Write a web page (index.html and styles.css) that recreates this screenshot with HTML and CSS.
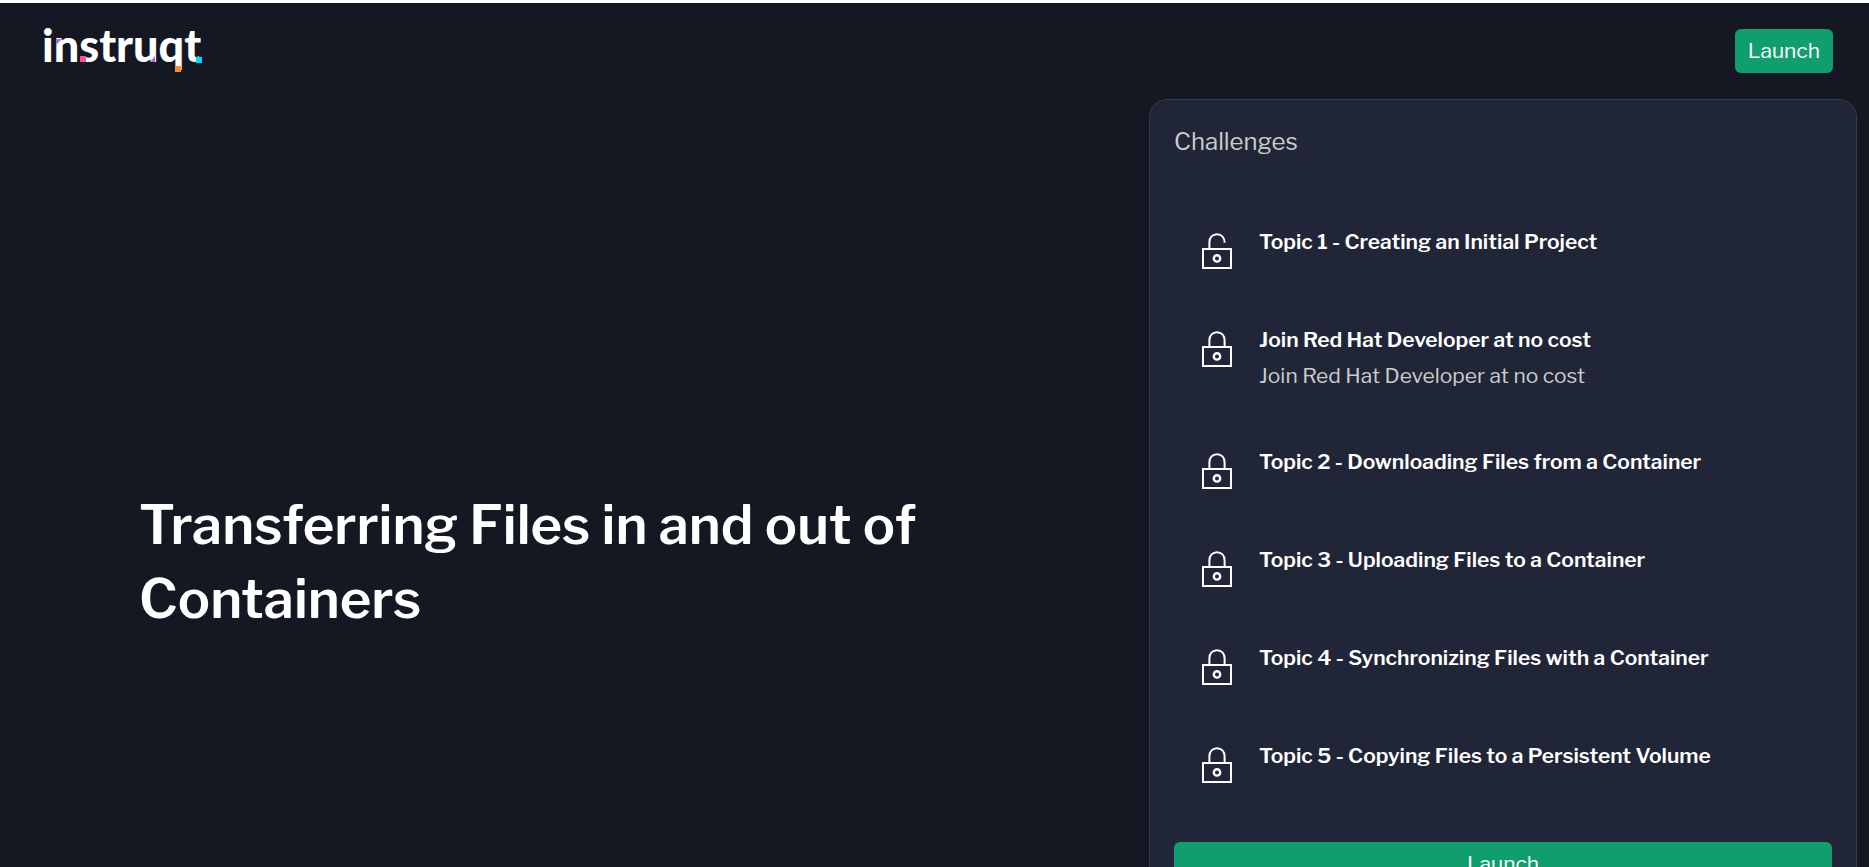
FILE: index.html
```html
<!DOCTYPE html>
<html lang="en">
<head>
<meta charset="utf-8">
<title>Transferring Files in and out of Containers</title>
<link rel="stylesheet" href="styles.css">
</head>
<body>
<svg class="sprite" aria-hidden="true">
  <symbol id="lock-body" viewBox="0 0 48 48">
    <path d="M10 25H38V44H10Z"/>
    <circle cx="24" cy="34.4" r="3.2" stroke-width="2.4"/>
  </symbol>
  <symbol id="lock-open" viewBox="0 0 48 48">
    <use href="#lock-body"/>
    <path d="M16.4 25V18.2C16.4 13.4 19.6 10.2 24 10.2C28.6 10.2 31.6 13.6 31.6 18.8"/>
  </symbol>
  <symbol id="lock-closed" viewBox="0 0 48 48">
    <use href="#lock-body"/>
    <path d="M16.4 25V18.2C16.4 13.4 19.6 10.2 24 10.2C28.4 10.2 31.6 13.4 31.6 18.2V25"/>
  </symbol>
</svg>
<div class="page">
  <header class="header">
    <a class="logo" href="#" aria-label="instruqt">
      <svg width="160" height="48" viewBox="0 0 160 48">
        <text class="wordmark" x="-2" y="33">instruqt</text>
        <path class="violet" d="M12 10H18L12 16Z"/>
        <path class="violet" d="M111 27V33H106Z"/>
        <rect class="pink" x="36" y="27" width="6" height="6"/>
        <rect class="orange" x="131" y="37" width="6" height="6"/>
        <rect class="cyan" x="152" y="28" width="6" height="6"/>
      </svg>
    </a>
    <button class="button" type="button">Launch</button>
  </header>
  <main class="main">
    <section class="hero">
      <h1 class="title">Transferring Files in and out of Containers</h1>
    </section>
    <section class="panel">
      <h2 class="panel-title">Challenges</h2>
      <ul class="list">
        <li class="item"><svg class="icon"><use href="#lock-open"/></svg><div><h3 class="name">Topic 1 - Creating an Initial Project</h3></div></li>
        <li class="item"><svg class="icon"><use href="#lock-closed"/></svg><div><h3 class="name">Join Red Hat Developer at no cost</h3><p class="note">Join Red Hat Developer at no cost</p></div></li>
        <li class="item"><svg class="icon"><use href="#lock-closed"/></svg><div><h3 class="name">Topic 2 - Downloading Files from a Container</h3></div></li>
        <li class="item"><svg class="icon"><use href="#lock-closed"/></svg><div><h3 class="name">Topic 3 - Uploading Files to a Container</h3></div></li>
        <li class="item"><svg class="icon"><use href="#lock-closed"/></svg><div><h3 class="name">Topic 4 - Synchronizing Files with a Container</h3></div></li>
        <li class="item"><svg class="icon"><use href="#lock-closed"/></svg><div><h3 class="name">Topic 5 - Copying Files to a Persistent Volume</h3></div></li>
      </ul>
      <button class="button" type="button">Launch</button>
    </section>
  </main>
</div>
</body>
</html>
```
FILE: styles.css
```css
* { box-sizing: border-box; }
body, h1, h2, h3, p, ul { margin: 0; padding: 0; }
body {
  background: #141823;
  color: #fff;
  font-family: "Libre Franklin", "Open Sans", sans-serif;
  font-size: 21px;
}
.sprite { position: absolute; width: 0; height: 0; }
.page {
  display: flex;
  flex-direction: column;
  height: 100vh;
  overflow: hidden;
  border-top: 3px solid #fcfcfc;
}
.header {
  display: flex;
  justify-content: space-between;
  align-items: flex-start;
  padding: 26px 36px 26px 44px;
}
.logo { display: block; height: 44px; }
.logo svg { display: block; overflow: visible; }
.wordmark {
  font-family: Lato, sans-serif;
  font-size: 45px;
  font-weight: 900;
  fill: #fff;
}
.violet { fill: #a66cf0; }
.pink { fill: #ff4fa3; }
.orange { fill: #ff8f22; }
.cyan { fill: #00d8ff; }
.button {
  height: 44px;
  padding: 0 13px 2px;
  border: 0;
  border-radius: 6px;
  background: #119e6f;
  color: #fff;
  font: inherit;
}
.main {
  display: grid;
  grid-template-columns: 1149fr 708fr;
  align-items: start;
  padding-right: 12px;
}
.hero { padding: 389px 139px 0; }
.title {
  font-size: 54px;
  font-weight: 600;
  line-height: 74px;
}
.panel {
  display: flex;
  flex-direction: column;
  padding: 24px;
  border: 1px solid #343a4a;
  border-radius: 18px;
  background: #202637;
}
.panel-title {
  color: #ccc;
  font-size: 24px;
  font-weight: 400;
  line-height: 36px;
}
.list {
  padding: 38px 19px 32px;
  list-style: none;
}
.item {
  display: flex;
  gap: 18px;
  padding: 26px 0 24px;
}
.icon {
  flex: none;
  width: 48px;
  height: 48px;
  fill: none;
  stroke: #fff;
  stroke-width: 2;
}
.name {
  font-size: 21px;
  font-weight: 600;
  line-height: 36px;
}
.note {
  color: #ccc;
  line-height: 36px;
}
```
